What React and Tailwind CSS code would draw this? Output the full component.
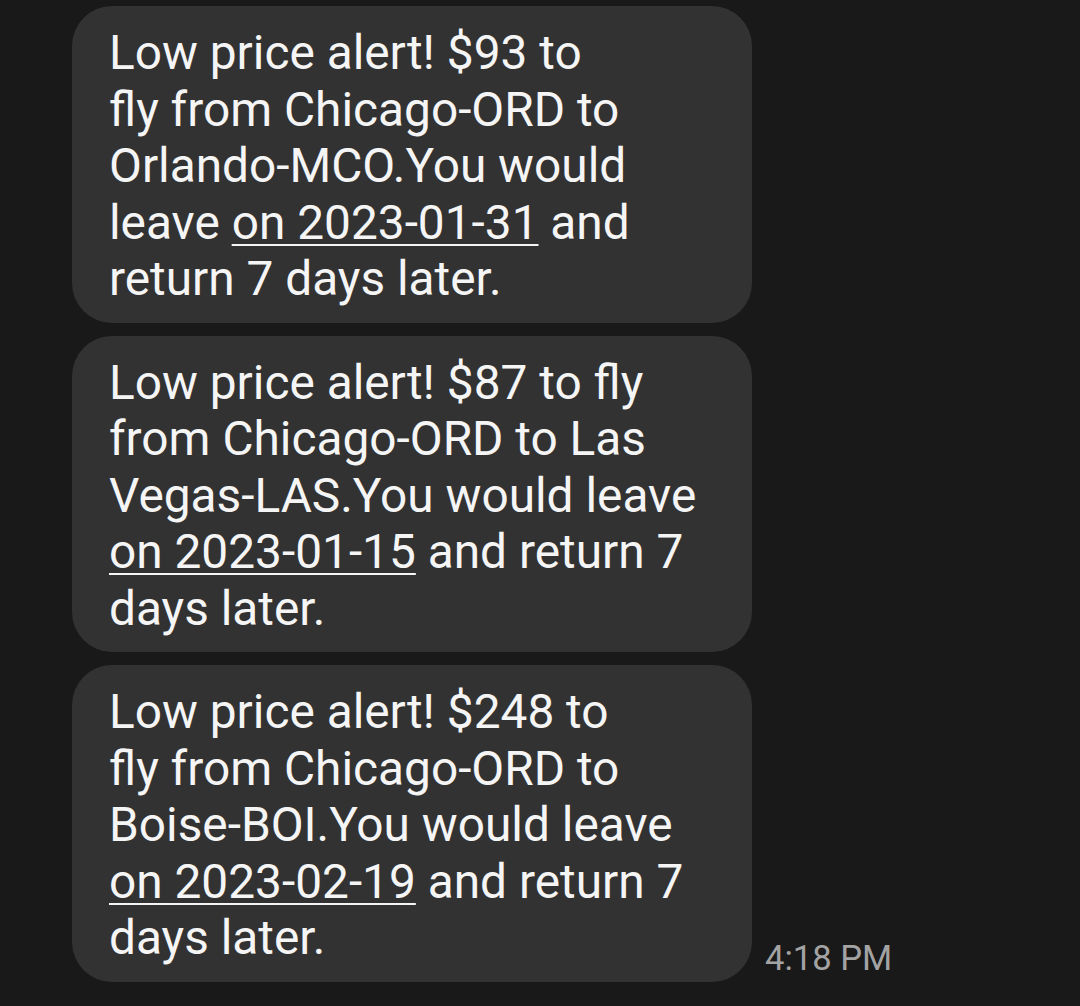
const messages = [
  {
    lines: [
      'Low price alert! $93 to',
      'fly from Chicago-ORD to',
      'Orlando-MCO.You would',
      ['leave ', 'on 2023-01-31', ' and'],
      'return 7 days later.',
    ],
  },
  {
    lines: [
      'Low price alert! $87 to fly',
      'from Chicago-ORD to Las',
      'Vegas-LAS.You would leave',
      ['', 'on 2023-01-15', ' and return 7'],
      'days later.',
    ],
  },
  {
    lines: [
      'Low price alert! $248 to',
      'fly from Chicago-ORD to',
      'Boise-BOI.You would leave',
      ['', 'on 2023-02-19', ' and return 7'],
      'days later.',
    ],
  },
];

const Line = ({ line }) => {
  if (typeof line === 'string') return <div>{line}</div>;
  const [before, link, after] = line;
  return (
    <div>
      {before}
      <span className="underline decoration-2 underline-offset-[5px]">{link}</span>
      {after}
    </div>
  );
};

const Bubble = ({ lines }) => (
  <div className="w-[680px] shrink-0 rounded-[40px] bg-[#323232] pl-[37px] pr-[20px] pt-[19px] pb-[15px] text-[47.8px] leading-[56.5px] text-[#f5f5f5] whitespace-nowrap">
    {lines.map((line, i) => (
      <Line key={i} line={line} />
    ))}
  </div>
);

export default function App() {
  return (
    <div
      className="w-[1080px] h-[1006px] overflow-hidden bg-[#191919] pl-[72px] pt-[6px] flex flex-col gap-[13px]"
      style={{ fontFamily: 'Roboto, "Noto Sans", sans-serif' }}
    >
      <Bubble lines={messages[0].lines} />
      <Bubble lines={messages[1].lines} />
      <div className="flex items-end">
        <Bubble lines={messages[2].lines} />
        <span className="ml-[13px] mb-[4px] text-[34.6px] leading-[40px] text-[#a3a3a3]">4:18 PM</span>
      </div>
    </div>
  );
}
